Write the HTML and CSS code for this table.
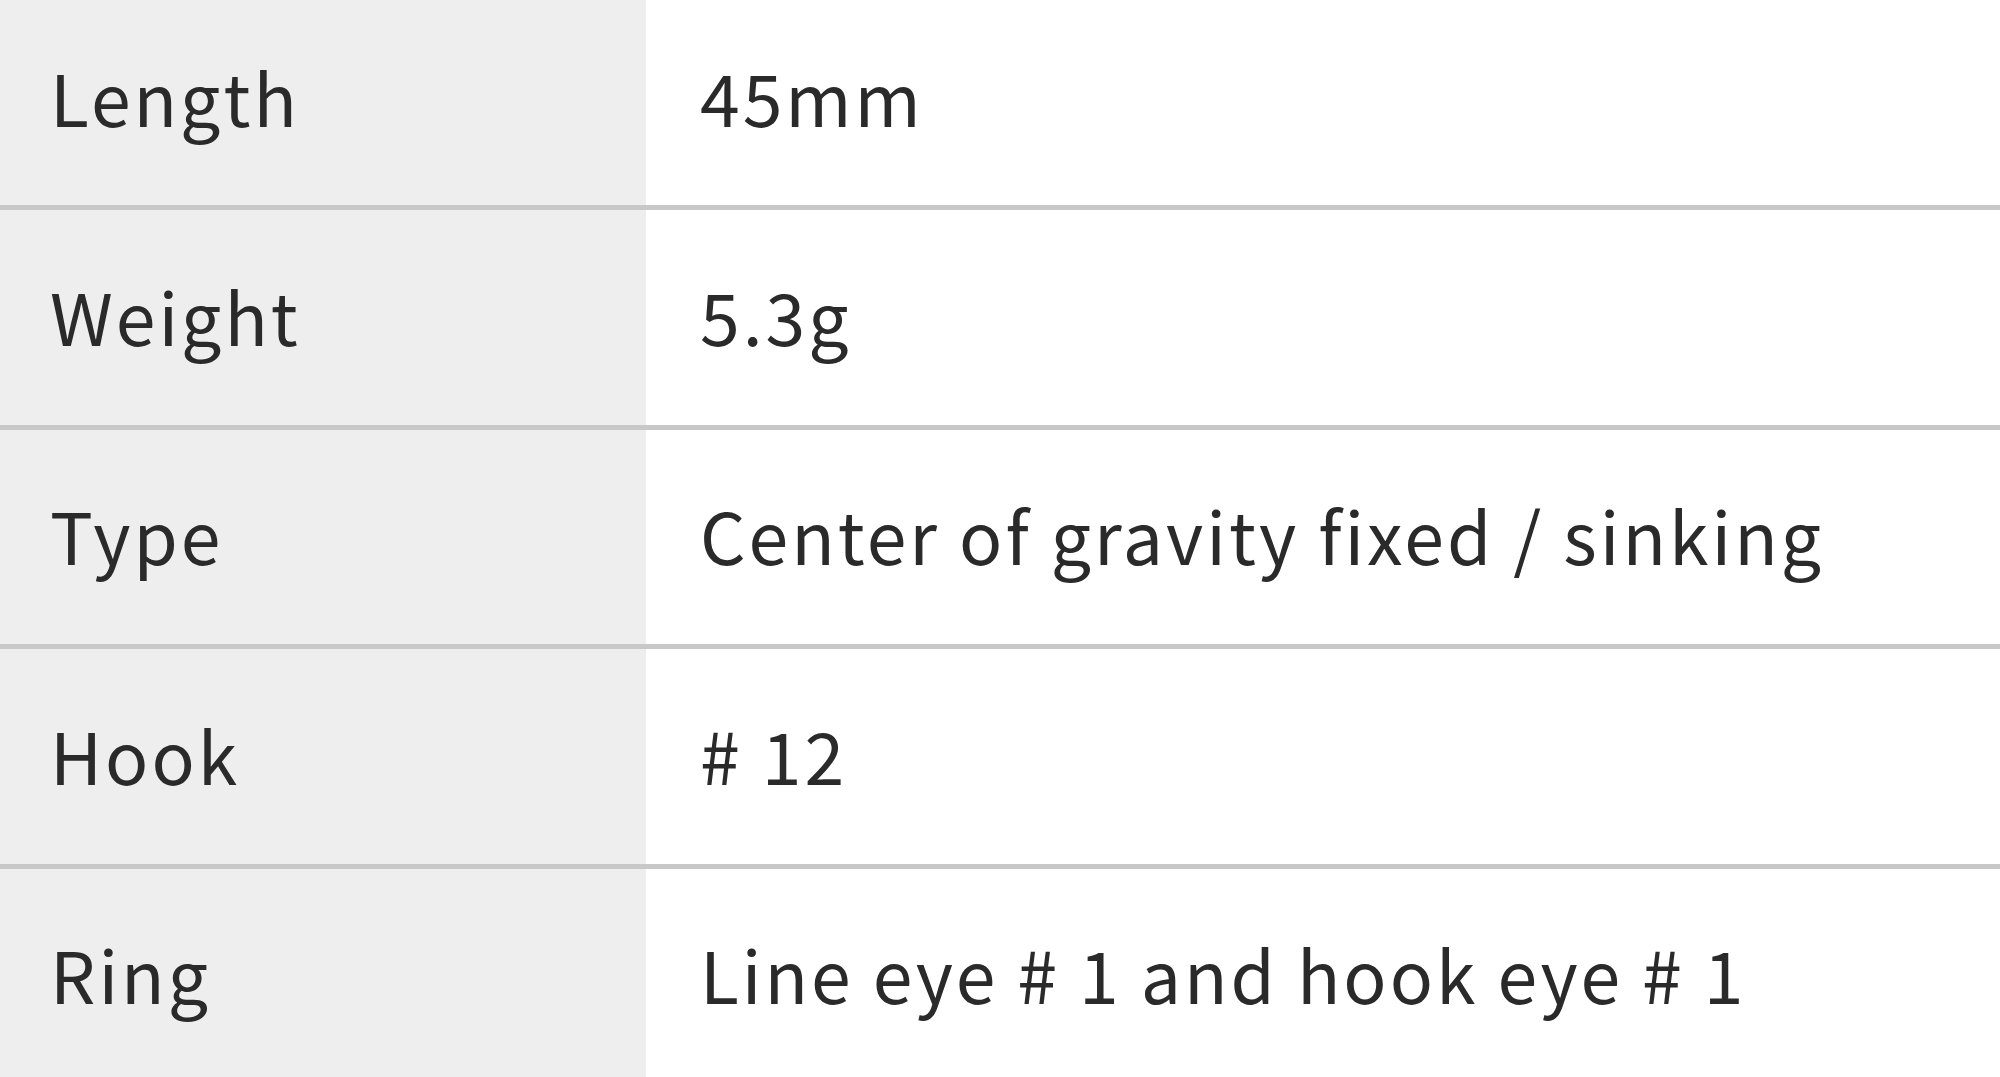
FILE: index.html
```html
<!DOCTYPE html>
<html lang="en">
<head>
<meta charset="utf-8">
<title>Spec</title>
<link rel="stylesheet" href="styles.css">
</head>
<body>
<div class="spec">
  <div class="row row-first">
    <div class="label">Length</div>
    <div class="value">45mm</div>
  </div>
  <div class="row">
    <div class="label">Weight</div>
    <div class="value">5.3g</div>
  </div>
  <div class="row">
    <div class="label">Type</div>
    <div class="value">Center of gravity fixed / sinking</div>
  </div>
  <div class="row">
    <div class="label">Hook</div>
    <div class="value"># 12</div>
  </div>
  <div class="row row-last">
    <div class="label">Ring</div>
    <div class="value">Line eye # 1 and hook eye # 1</div>
  </div>
</div>
</body>
</html>
```
FILE: styles.css
```css
html, body {
  margin: 0;
  padding: 0;
  background: #ffffff;
}
body {
  width: 2000px;
  height: 1077px;
  overflow: hidden;
  font-family: "Noto Sans CJK JP", "Noto Sans", sans-serif;
  color: #2a2a2a;
}
.spec {
  display: flex;
  flex-direction: column;
  margin-top: -12px;
}
.row {
  display: grid;
  grid-template-columns: 646px 1fr;
  height: 214.5px;
  border-bottom: 5px solid #c8c8c8;
}
.row-first {
  height: 217px;
}
.row-last {
  border-bottom: none;
}
.label,
.value {
  display: flex;
  align-items: center;
  font-size: 71.5px;
  letter-spacing: 3px;
  line-height: 1;
  padding-bottom: 4px;
}
.row-first .label,
.row-first .value {
  padding-bottom: 0;
}
.label {
  background: #eeeeee;
  padding-left: 50px;
}
.value {
  padding-left: 54px;
}
```
